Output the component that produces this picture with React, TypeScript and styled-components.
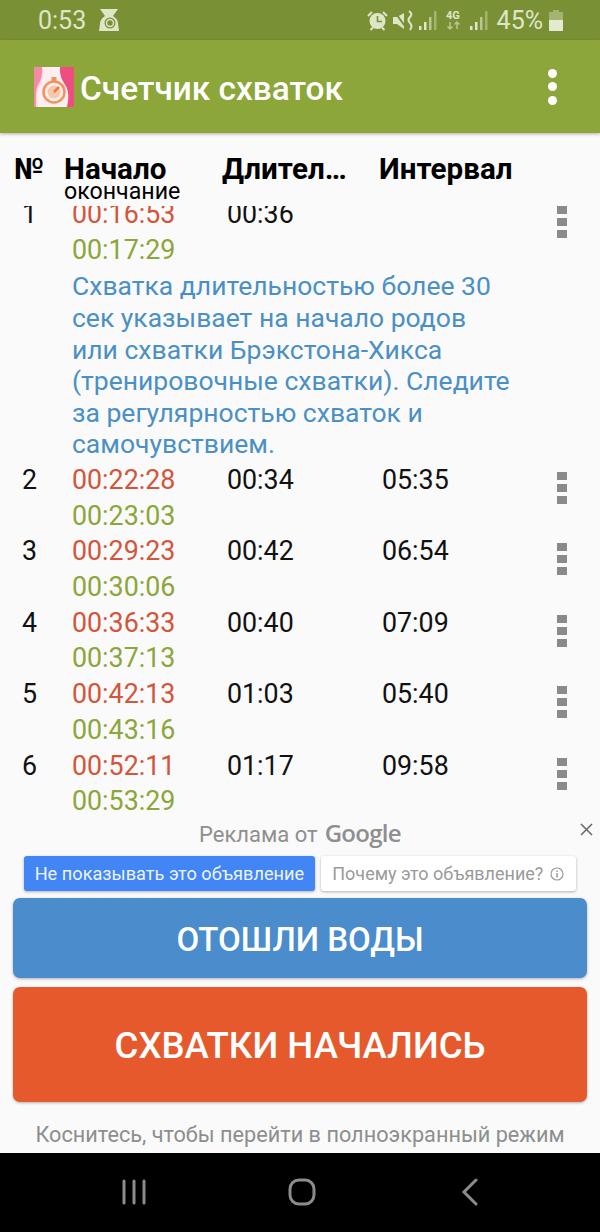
import React from 'react';
import styled, { createGlobalStyle } from 'styled-components';

const GlobalStyle = createGlobalStyle`
  html, body {
    margin: 0;
    padding: 0;
    background: #fafafa;
  }
  body {
    font-family: Roboto, 'Noto Sans', sans-serif;
  }
`;

const Screen = styled.div`
  width: 600px;
  height: 1232px;
  display: flex;
  flex-direction: column;
  overflow: hidden;
  background: #fafafa;
`;

const StatusBar = styled.div`
  height: 40px;
  flex: none;
  display: flex;
  align-items: center;
  justify-content: space-between;
  padding: 0 37px 0 38px;
  background: #7a9035;
  color: #dfe6c8;
  font-size: 25px;
`;

const StatusGroup = styled.div<{ $gap: number }>`
  display: flex;
  align-items: center;
  gap: ${(p) => p.$gap}px;
`;

const AppBar = styled.div`
  height: 93px;
  flex: none;
  display: flex;
  align-items: center;
  padding: 0 43px 0 34px;
  background: #8ca63a;
  box-shadow: 0 1px 3px rgba(0, 0, 0, 0.3);
  position: relative;
  z-index: 2;
`;

const AppTitle = styled.div`
  flex: 1;
  margin-left: 6px;
  padding-top: 3px;
  color: #fff;
  font-size: 33.4px;
  font-weight: 500;
`;

const MenuDots = styled.div`
  display: flex;
  flex-direction: column;
  gap: 4.5px;
`;

const MenuDot = styled.span`
  width: 9px;
  height: 9px;
  border-radius: 50%;
  background: #fff;
`;

const TableHead = styled.div`
  height: 73px;
  flex: none;
  display: grid;
  grid-template-columns: 50px 158px 157px 1fr;
  padding: 21px 0 0 14px;
  box-sizing: border-box;
  color: #000;
`;

const HeadTitle = styled.div`
  font-size: 29.6px;
  font-weight: 700;
  line-height: 30px;
`;

const HeadSub = styled.div`
  font-size: 23.2px;
  line-height: 18px;
  margin-top: -2px;
`;

const Rows = styled.div`
  height: 610px;
  flex: none;
  overflow: hidden;
`;

const RowList = styled.div`
  margin-top: -9px;
`;

const Row = styled.div`
  display: grid;
  grid-template-columns: 50px 155px 155px 175px 1fr;
  padding-left: 22px;
  color: #111;
  font-size: 26.8px;
`;

const Cell = styled.div`
  line-height: 35.7px;
`;

const StartTime = styled.div`
  color: #d3553a;
`;

const EndTime = styled.div`
  color: #8ca63a;
`;

const Note = styled.div`
  grid-column: 2 / 6;
  width: 440px;
  color: #4a90c4;
  font-size: 26.5px;
  line-height: 31.6px;
  padding: 2px 0 3px;
`;

const RowMenu = styled.div`
  display: flex;
  flex-direction: column;
  gap: 4px;
  padding-top: 9px;
`;

const RowMenuDot = styled.span`
  width: 10px;
  height: 8px;
  background: #8a8a8a;
`;

const AdBlock = styled.div`
  flex: none;
  display: flex;
  flex-direction: column;
  align-items: center;
  position: relative;
  height: 82px;
`;

const AdLabel = styled.div`
  display: flex;
  align-items: baseline;
  gap: 7px;
  height: 40px;
  padding-top: 3px;
  box-sizing: border-box;
  color: #8f8f8f;
  font-size: 22px;
  line-height: 28px;
`;

const GoogleWord = styled.span`
  font-family: 'Open Sans', sans-serif;
  font-size: 24px;
  font-weight: 600;
  letter-spacing: -0.7px;
`;

const CloseMark = styled.svg`
  position: absolute;
  right: 7px;
  top: 7px;
`;

const AdButtons = styled.div`
  display: flex;
  gap: 6px;
`;

const AdButton = styled.div<{ $primary?: boolean }>`
  height: 35px;
  display: flex;
  align-items: center;
  gap: 7px;
  box-sizing: border-box;
  padding: 0 ${(p) => (p.$primary ? '11px' : '12px')} 0 11px;
  border-radius: 3px;
  font-size: ${(p) => (p.$primary ? '18.2px' : '18px')};
  background: ${(p) => (p.$primary ? '#4285f4' : '#fff')};
  color: ${(p) => (p.$primary ? '#eef4ff' : '#9a9a9a')};
  box-shadow: 0 1px 3px rgba(0, 0, 0, 0.3);
`;

const Actions = styled.div`
  flex: none;
  display: flex;
  flex-direction: column;
  gap: 9px;
  padding: 0 13px;
`;

const ActionButton = styled.div<{ $color: string; $height: number; $size: number }>`
  height: ${(p) => p.$height}px;
  display: flex;
  align-items: center;
  justify-content: center;
  box-sizing: border-box;
  padding-top: 2px;
  border-radius: 7px;
  background: ${(p) => p.$color};
  color: #fff;
  font-size: ${(p) => p.$size}px;
  font-weight: 500;
  box-shadow: 0 1px 3px rgba(0, 0, 0, 0.3);
`;

const Hint = styled.div`
  flex: 1;
  display: flex;
  align-items: center;
  justify-content: center;
  color: #8e8e8e;
  font-size: 21.7px;
  padding-top: 14px;
`;

const NavBar = styled.div`
  height: 79px;
  flex: none;
  display: grid;
  grid-template-columns: repeat(3, 168px);
  align-items: center;
  background: #000;
  padding: 0 0 1px 50px;
  box-sizing: border-box;
`;

const NavSlot = styled.div`
  display: flex;
  justify-content: center;
`;

const AppIcon = () => (
  <svg width="40" height="40" viewBox="0 0 40 40">
    <rect width="40" height="40" rx="2" fill="#fcd6e0" />
    <path d="M26 0H40V40H33Q37 24 29 16Q25 8 26 0Z" fill="#ee4d80" />
    <path d="M0 0H8Q9 10 4 18Q1 24 2 40H0Z" fill="#f58aa8" />
    <path d="M9 0H26Q25 9 30 16Q37 25 32 40H4Q1 25 7 17Q10 9 9 0Z" fill="#fdeef2" />
    <circle cx="20" cy="25" r="10.5" fill="none" stroke="#f0945c" strokeWidth="2.5" />
    <circle cx="20" cy="25" r="6.5" fill="#f8c9a8" />
    <rect x="17.5" y="10" width="5" height="4" fill="#f0945c" />
    <path d="M20 25L25 20" stroke="#ea7c3e" strokeWidth="2.5" />
  </svg>
);

const NotifyIcon = () => (
  <svg width="20" height="22" viewBox="0 0 20 22" fill="#dfe6c8">
    <path d="M1 0H19L14 7Q19 10 19 15L20 22H0L1 15Q1 10 6 7Z" />
    <circle cx="11" cy="14" r="5.5" fill="#7a9035" />
    <circle cx="11" cy="14" r="3.5" fill="none" stroke="#dfe6c8" strokeWidth="1.5" />
  </svg>
);

const AlarmIcon = () => (
  <svg width="21" height="21" viewBox="0 0 21 21">
    <circle cx="10.5" cy="11" r="8" fill="#dfe6c8" />
    <path d="M10.5 6V11.5H15" fill="none" stroke="#7a9035" strokeWidth="1.6" />
    <path d="M1 6L5 2M20 6L16 2M3.500 20L6 17.500M17.500 20L15 17.500" stroke="#dfe6c8" strokeWidth="2" />
  </svg>
);

const MuteIcon = () => (
  <svg width="20" height="21" viewBox="0 0 20 21" fill="#dfe6c8">
    <path d="M0 7H4L11 3V19L4 14H0Z" />
    <path d="M1 1L14 19" stroke="#7a9035" strokeWidth="2" />
    <path d="M16 1Q20 4 17 7Q14 10 17 13Q20 16 17 20" fill="none" stroke="#dfe6c8" strokeWidth="2" />
  </svg>
);

const SignalIcon = () => (
  <svg width="18" height="20" viewBox="0 0 18 20">
    <rect x="0" y="16" width="2.5" height="4" fill="#dfe6c8" />
    <rect x="5" y="12" width="2.500" height="8" fill="#dfe6c8" />
    <rect x="10" y="7" width="2.500" height="13" fill="#b9c68e" />
    <rect x="15" y="1" width="2.500" height="19" fill="#a3b370" />
  </svg>
);

const FourGIcon = () => (
  <svg width="15" height="22" viewBox="0 0 15 22">
    <text x="0" y="10" fontSize="11" fontWeight="700" fontFamily="Roboto, sans-serif" fill="#dfe6c8">
      4G
    </text>
    <path d="M4 13V20M1.500 17.500L4 20L6.500 17.500" fill="none" stroke="#b9c68e" strokeWidth="1.5" />
    <path d="M11 20V13M8.500 15.500L11 13L13.500 15.500" fill="none" stroke="#b9c68e" strokeWidth="1.5" />
  </svg>
);

const BatteryIcon = () => (
  <svg width="14" height="21" viewBox="0 0 14 21">
    <path d="M4 0H10V2H14V21H0V2H4Z" fill="#a3b370" />
    <rect y="10" width="14" height="11" fill="#e4eacf" />
  </svg>
);

const InfoIcon = () => (
  <svg width="14" height="14" viewBox="0 0 14 14">
    <circle cx="7" cy="7" r="6" fill="none" stroke="#9a9a9a" strokeWidth="1.2" />
    <path d="M7 6V10.500M7 3.500V5" stroke="#9a9a9a" strokeWidth="1.5" />
  </svg>
);

const NavRecents = () => (
  <svg width="26" height="26" viewBox="0 0 26 26">
    <path d="M3 2V24M13 2V24M23 2V24" stroke="#8c8c8c" strokeWidth="3" strokeLinecap="round" />
  </svg>
);

const NavHome = () => (
  <svg width="28" height="28" viewBox="0 0 28 28">
    <rect x="2" y="2" width="24" height="24" rx="9" fill="none" stroke="#8c8c8c" strokeWidth="3" />
  </svg>
);

const NavBack = () => (
  <svg width="18" height="28" viewBox="0 0 18 28">
    <path d="M15 2L3 14L15 26" fill="none" stroke="#8c8c8c" strokeWidth="3" strokeLinecap="round" />
  </svg>
);

const rows = [
  ['1', '00:16:53', '00:17:29', '00:36', ''],
  ['2', '00:22:28', '00:23:03', '00:34', '05:35'],
  ['3', '00:29:23', '00:30:06', '00:42', '06:54'],
  ['4', '00:36:33', '00:37:13', '00:40', '07:09'],
  ['5', '00:42:13', '00:43:16', '01:03', '05:40'],
  ['6', '00:52:11', '00:53:29', '01:17', '09:58'],
];

export default function App() {
  return (
    <Screen>
      <GlobalStyle />
      <StatusBar>
        <StatusGroup $gap={13}>
          <span>0:53</span>
          <NotifyIcon />
        </StatusGroup>
        <StatusGroup $gap={9}>
          <StatusGroup $gap={5.5}>
            <AlarmIcon />
            <MuteIcon />
            <SignalIcon />
          </StatusGroup>
          <FourGIcon />
          <SignalIcon />
          <StatusGroup $gap={6}>
            <span>45%</span>
            <BatteryIcon />
          </StatusGroup>
        </StatusGroup>
      </StatusBar>
      <AppBar>
        <AppIcon />
        <AppTitle>Счетчик схваток</AppTitle>
        <MenuDots>
          <MenuDot />
          <MenuDot />
          <MenuDot />
        </MenuDots>
      </AppBar>
      <TableHead>
        <HeadTitle>№</HeadTitle>
        <div>
          <HeadTitle>Начало</HeadTitle>
          <HeadSub>окончание</HeadSub>
        </div>
        <HeadTitle>Длител…</HeadTitle>
        <HeadTitle>Интервал</HeadTitle>
      </TableHead>
      <Rows>
        <RowList>
          {rows.map((r) => (
            <Row key={r[0]}>
              <Cell>{r[0]}</Cell>
              <Cell>
                <StartTime>{r[1]}</StartTime>
                <EndTime>{r[2]}</EndTime>
              </Cell>
              <Cell>{r[3]}</Cell>
              <Cell>{r[4]}</Cell>
              <RowMenu>
                <RowMenuDot />
                <RowMenuDot />
                <RowMenuDot />
              </RowMenu>
              {r[0] === '1' && (
                <Note>
                  Схватка длительностью более 30 сек указывает на начало родов или схватки
                  Брэкстона-Хикса (тренировочные схватки). Следите за регулярностью схваток и
                  самочувствием.
                </Note>
              )}
            </Row>
          ))}
        </RowList>
      </Rows>
      <AdBlock>
        <AdLabel>
          Реклама от <GoogleWord>Google</GoogleWord>
        </AdLabel>
        <CloseMark width="13" height="13" viewBox="0 0 13 13">
          <path d="M1 1L12 12M12 1L1 12" stroke="#666" strokeWidth="1.5" />
        </CloseMark>
        <AdButtons>
          <AdButton $primary>Не показывать это объявление</AdButton>
          <AdButton>
            Почему это объявление? <InfoIcon />
          </AdButton>
        </AdButtons>
      </AdBlock>
      <Actions>
        <ActionButton $color="#4a8ccc" $height={80} $size={33}>
          ОТОШЛИ ВОДЫ
        </ActionButton>
        <ActionButton $color="#e5592d" $height={115} $size={36.6}>
          СХВАТКИ НАЧАЛИСЬ
        </ActionButton>
      </Actions>
      <Hint>Коснитесь, чтобы перейти в полноэкранный режим</Hint>
      <NavBar>
        <NavSlot>
          <NavRecents />
        </NavSlot>
        <NavSlot>
          <NavHome />
        </NavSlot>
        <NavSlot>
          <NavBack />
        </NavSlot>
      </NavBar>
    </Screen>
  );
}
